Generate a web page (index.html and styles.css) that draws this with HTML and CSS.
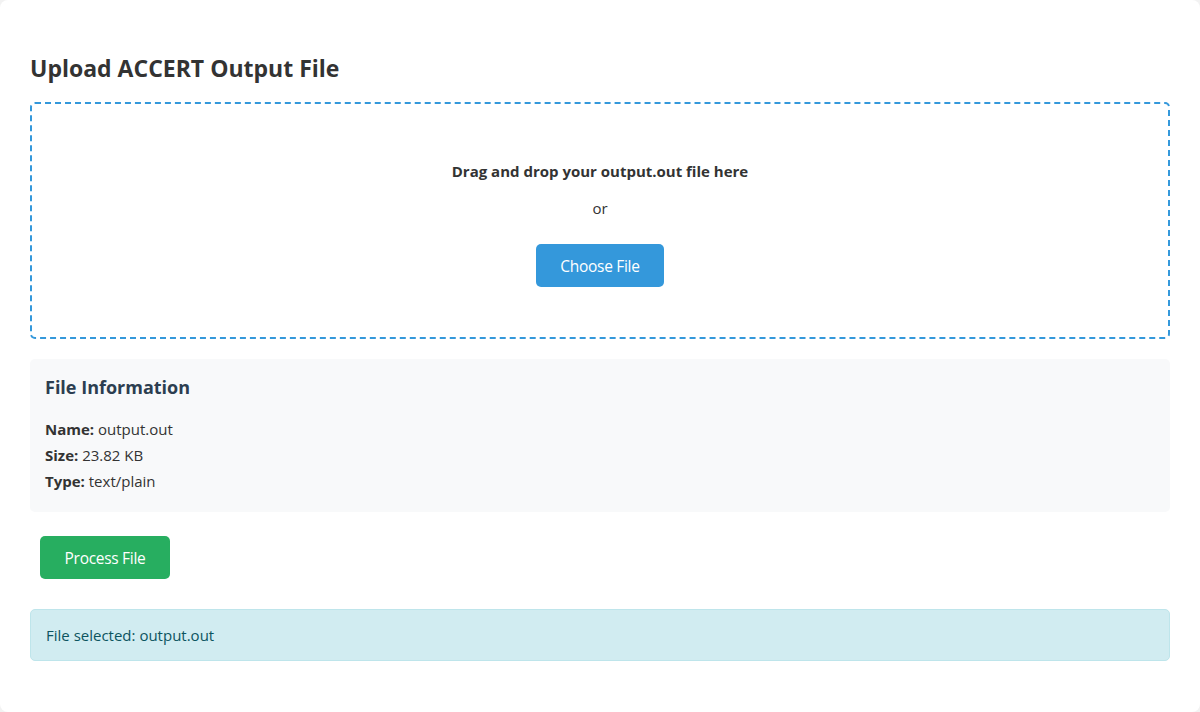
FILE: index.html
```html
<!DOCTYPE html>
<html lang="en">
<head>
<meta charset="utf-8">
<title>Upload ACCERT Output File</title>
<link rel="stylesheet" href="styles.css">
</head>
<body>
<div class="card">
  <h2 class="title">Upload ACCERT Output File</h2>
  <div class="dropzone">
    <p class="drop-text">Drag and drop your output.out file here</p>
    <p class="or">or</p>
    <button class="btn btn-blue">Choose File</button>
  </div>
  <div class="file-info">
    <h3 class="info-title">File Information</h3>
    <p class="info-line"><strong>Name:</strong> output.out</p>
    <p class="info-line"><strong>Size:</strong> 23.82 KB</p>
    <p class="info-line"><strong>Type:</strong> text/plain</p>
  </div>
  <button class="btn btn-green">Process File</button>
  <div class="alert">File selected: output.out</div>
</div>
</body>
</html>
```

FILE: styles.css
```css
html, body {
  margin: 0;
  padding: 0;
}
body {
  background: #f2f2f2;
  font-family: "Open Sans", "Noto Sans", sans-serif;
  color: #333;
}
.card {
  box-sizing: border-box;
  width: 1200px;
  min-height: 712px;
  background: #fff;
  border-radius: 8px;
  padding: 30px;
  display: flex;
  flex-direction: column;
  align-items: stretch;
}
.title {
  font-size: 23px;
  font-weight: 700;
  color: #333;
  margin: 22px 0 18px;
  line-height: 32px;
}
.dropzone {
  border: 2px dashed #3498db;
  border-radius: 5px;
  padding: 40px 20px 50px;
  display: flex;
  flex-direction: column;
  align-items: center;
  margin-bottom: 20px;
}
.drop-text {
  margin: 16px 0 0;
  font-size: 15px;
  font-weight: 700;
  line-height: 22px;
}
.or {
  margin: 15px 0 25px;
  font-size: 15px;
  line-height: 22px;
}
.btn {
  border: none;
  border-radius: 5px;
  color: #fff;
  font-family: "Open Sans", "Noto Sans", sans-serif;
  font-size: 15.5px;
  height: 43px;
  letter-spacing: -0.3px;
  cursor: pointer;
}
.btn-blue {
  background: #3498db;
  width: 128px;
}
.btn-green {
  background: #27ae60;
  width: 130px;
  align-self: flex-start;
  margin: 24px 10px 30px;
}
.file-info {
  background: #f8f9fa;
  border-radius: 5px;
  padding: 15px 15px 18px;
}
.info-title {
  margin: 0 0 16px;
  font-size: 18px;
  font-weight: 700;
  color: #2c3e50;
  line-height: 26px;
}
.info-line {
  margin: 0;
  font-size: 15px;
  line-height: 26px;
}
.alert {
  background: #d1ecf1;
  border: 1px solid #bee5eb;
  color: #0c5460;
  border-radius: 5px;
  padding: 14px 15px;
  font-size: 15px;
  line-height: 22px;
}
```
